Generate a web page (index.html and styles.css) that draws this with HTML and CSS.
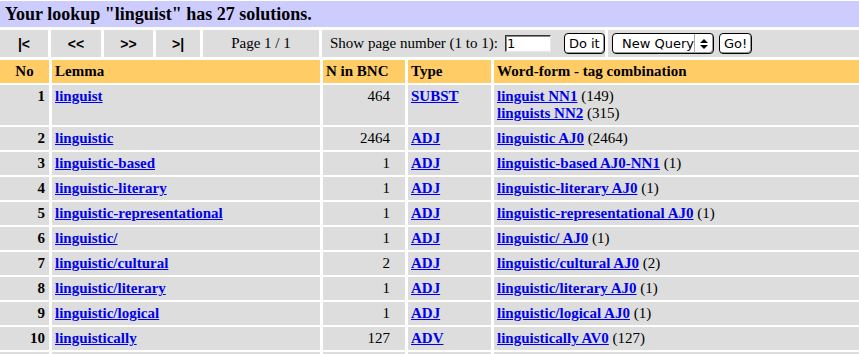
FILE: index.html
```html
<!DOCTYPE html>
<html lang="en">
<head>
    <meta charset="UTF-8">
    <title>BNC lookup: linguist</title>
    <link rel="stylesheet" href="styles.css">
</head>
<body>

    <div class="title">Your lookup "linguist" has 27 solutions.</div>

    <div class="nav">
        <a class="navbtn" href="#">|&lt;</a>
        <a class="navbtn" href="#">&lt;&lt;</a>
        <a class="navbtn" href="#">&gt;&gt;</a>
        <a class="navbtn" href="#">&gt;|</a>
        <div class="page">Page 1 / 1</div>
        <form class="jump">
            Show page number (1 to 1):
            <input type="text" class="pageno" value="1">
            <button type="button" class="btn doit">Do it</button>
        </form>
        <form class="query">
            <span class="select">
                <select>
                    <option>New Query</option>
                </select>
                <span class="spin">
                    <svg width="8" height="12" viewBox="0 0 8 12">
                        <polygon points="0,5 4,1 8,5" fill="#000"/>
                        <polygon points="0,7 4,11 8,7" fill="#000"/>
                    </svg>
                </span>
            </span>
            <button type="button" class="btn">Go!</button>
        </form>
    </div>

    <div class="wrap">
    <table class="results">
        <colgroup>
            <col class="c-no">
            <col class="c-lemma">
            <col class="c-n">
            <col class="c-type">
            <col>
        </colgroup>
        <tr>
            <th class="no">No</th>
            <th>Lemma</th>
            <th>N in BNC</th>
            <th>Type</th>
            <th>Word-form - tag combination</th>
        </tr>
        <tr>
            <td class="no">1</td>
            <td><a href="#">linguist</a></td>
            <td class="num">464</td>
            <td><a href="#">SUBST</a></td>
            <td><a href="#">linguist NN1</a> (149)<br><a href="#">linguists NN2</a> (315)</td>
        </tr>
        <tr>
            <td class="no">2</td>
            <td><a href="#">linguistic</a></td>
            <td class="num">2464</td>
            <td><a href="#">ADJ</a></td>
            <td><a href="#">linguistic AJ0</a> (2464)</td>
        </tr>
        <tr>
            <td class="no">3</td>
            <td><a href="#">linguistic-based</a></td>
            <td class="num">1</td>
            <td><a href="#">ADJ</a></td>
            <td><a href="#">linguistic-based AJ0-NN1</a> (1)</td>
        </tr>
        <tr>
            <td class="no">4</td>
            <td><a href="#">linguistic-literary</a></td>
            <td class="num">1</td>
            <td><a href="#">ADJ</a></td>
            <td><a href="#">linguistic-literary AJ0</a> (1)</td>
        </tr>
        <tr>
            <td class="no">5</td>
            <td><a href="#">linguistic-representational</a></td>
            <td class="num">1</td>
            <td><a href="#">ADJ</a></td>
            <td><a href="#">linguistic-representational AJ0</a> (1)</td>
        </tr>
        <tr>
            <td class="no">6</td>
            <td><a href="#">linguistic/</a></td>
            <td class="num">1</td>
            <td><a href="#">ADJ</a></td>
            <td><a href="#">linguistic/ AJ0</a> (1)</td>
        </tr>
        <tr>
            <td class="no">7</td>
            <td><a href="#">linguistic/cultural</a></td>
            <td class="num">2</td>
            <td><a href="#">ADJ</a></td>
            <td><a href="#">linguistic/cultural AJ0</a> (2)</td>
        </tr>
        <tr>
            <td class="no">8</td>
            <td><a href="#">linguistic/literary</a></td>
            <td class="num">1</td>
            <td><a href="#">ADJ</a></td>
            <td><a href="#">linguistic/literary AJ0</a> (1)</td>
        </tr>
        <tr>
            <td class="no">9</td>
            <td><a href="#">linguistic/logical</a></td>
            <td class="num">1</td>
            <td><a href="#">ADJ</a></td>
            <td><a href="#">linguistic/logical AJ0</a> (1)</td>
        </tr>
        <tr>
            <td class="no">10</td>
            <td><a href="#">linguistically</a></td>
            <td class="num">127</td>
            <td><a href="#">ADV</a></td>
            <td><a href="#">linguistically AV0</a> (127)</td>
        </tr>
        <tr>
            <td class="no">11</td>
            <td><a href="#">linguistics</a></td>
            <td class="num">1</td>
            <td><a href="#">SUBST</a></td>
            <td><a href="#">linguistics NN1</a> (1)</td>
        </tr>
    </table>
    </div>

</body>
</html>
```

FILE: styles.css
```css
body {
    margin: 0;
    padding: 0;
    font-family: "Liberation Serif", "Times New Roman", serif;
    font-size: 15px;
    color: #000;
    background: #fff;
}

.title {
    margin-top: 1px;
    height: 26px;
    line-height: 26px;
    padding-left: 5px;
    background-color: #ccccff;
    font-size: 18px;
    font-weight: bold;
}

.nav {
    display: grid;
    grid-template-columns: 48px 50px 49px 44px 116px 283px 1fr;
    gap: 3px;
    margin-top: 3px;
    height: 27px;
}

.nav > * {
    background-color: #dddddd;
    display: flex;
    align-items: center;
}

.navbtn {
    justify-content: center;
    font-family: "Liberation Sans", Arial, sans-serif;
    font-size: 14px;
    font-weight: bold;
    color: #000;
    text-decoration: none;
}

.page {
    justify-content: center;
}

.jump {
    margin: 0;
    padding-left: 8px;
    white-space: nowrap;
}

.query {
    margin: 0;
    padding-left: 4px;
}

.pageno {
    width: 42px;
    height: 15px;
    margin: 0 0 0 7px;
    padding: 0 1px;
    border: 1px solid;
    border-color: #333 #e8e8e8 #e8e8e8 #333;
    box-shadow: inset 1px 1px 0 #888;
    font-family: "DejaVu Sans", sans-serif;
    font-size: 13px;
    line-height: 15px;
}

.btn {
    height: 21px;
    padding: 0 4px;
    border: 1px solid #000;
    border-radius: 4px;
    background: #fff;
    box-shadow: inset -1px -1px 0 #999;
    font-family: "DejaVu Sans", sans-serif;
    font-size: 13px;
    color: #000;
}

.doit {
    margin-left: 13px;
}

.select {
    display: inline-flex;
    align-items: stretch;
    width: 100px;
    height: 19px;
    margin-right: 5px;
    border: 1px solid #000;
    border-radius: 4px;
    background: #fff;
    box-shadow: inset -1px -1px 0 #999;
}

.select select {
    appearance: none;
    -webkit-appearance: none;
    flex: 1;
    border: none;
    background: transparent;
    padding: 0 0 0 9px;
    font-family: "DejaVu Sans", sans-serif;
    font-size: 13px;
    color: #000;
}

.spin {
    display: flex;
    align-items: center;
    justify-content: center;
    width: 19px;
    border-left: 1px solid #aaa;
}

.wrap {
    overflow: hidden;
}

.results {
    table-layout: fixed;
    border-collapse: separate;
    border-spacing: 3px 2px;
    width: calc(100% + 6px);
    margin: 1px -3px 0;
}

.c-no { width: 49px; }
.c-lemma { width: 268px; }
.c-n { width: 82px; }
.c-type { width: 83px; }

.results th {
    background-color: #ffcc66;
    text-align: left;
    padding: 3px 3px;
    line-height: 17px;
}

.results td {
    background-color: #dddddd;
    vertical-align: top;
    padding: 3px 3px;
    line-height: 17px;
}

.results th.no {
    text-align: center;
}

.results td.no {
    text-align: right;
    font-weight: bold;
    padding-right: 4px;
}

.results td.num {
    text-align: right;
    padding-right: 15px;
}

.results a {
    color: #0000ee;
    font-weight: bold;
}
```
